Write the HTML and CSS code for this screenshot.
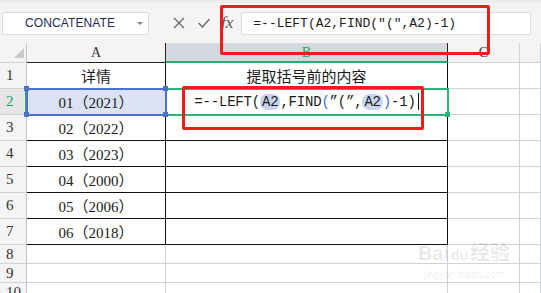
FILE: index.html
```html
<!DOCTYPE html>
<html lang="zh-CN">
<head>
  <meta charset="UTF-8" />
  <meta name="viewport" content="width=device-width, initial-scale=1.0"/>
  <title>提取括号前的内容</title>
  <link rel="stylesheet" href="styles.css">
</head>
<body>
  <div class="toolbar">
    <div class="name-box">
      <span class="name-text">CONCATENATE</span>
      <span class="name-arrow"></span>
    </div>
    <div class="bar-icons">
      <svg class="icon" width="14" height="14" viewBox="0 0 14 14"><path d="M2 2 L12 12 M12 2 L2 12" stroke="#666" stroke-width="1.3" fill="none"/></svg>
      <svg class="icon" width="14" height="14" viewBox="0 0 14 14"><path d="M1.5 7 L5.5 11 L12.5 3" stroke="#666" stroke-width="1.3" fill="none"/></svg>
      <span class="fx">fx</span>
    </div>
    <div class="formula-box">=--LEFT(A2,FIND("(",A2)-1)</div>
  </div>

  <div class="sheet">
    <div class="corner"><span class="corner-tri"></span></div>
    <div class="col-head dark">A</div>
    <div class="col-head dark active">B</div>
    <div class="col-head">C</div>
    <div class="col-head"></div>

    <div class="row-head">1</div>
    <div class="cell t">详情</div>
    <div class="cell t">提取括号前的内容</div>
    <div class="cell"></div>
    <div class="cell"></div>

    <div class="row-head active">2</div>
    <div class="cell t selected">01（2021）
      <span class="handle tl"></span><span class="handle tr"></span>
      <span class="handle bl"></span><span class="handle br"></span>
    </div>
    <div class="cell t editing">=--LEFT(<span class="ref">A2</span>,FIND<span class="paren">(</span>”(”,<span class="ref">A2</span><span class="paren">)</span>-1)<span class="caret"></span><span class="edit-handle"></span></div>
    <div class="cell"></div>
    <div class="cell"></div>

    <div class="row-head">3</div>
    <div class="cell t">02（2022）</div>
    <div class="cell t"></div>
    <div class="cell"></div>
    <div class="cell"></div>

    <div class="row-head">4</div>
    <div class="cell t">03（2023）</div>
    <div class="cell t"></div>
    <div class="cell"></div>
    <div class="cell"></div>

    <div class="row-head">5</div>
    <div class="cell t">04（2000）</div>
    <div class="cell t"></div>
    <div class="cell"></div>
    <div class="cell"></div>

    <div class="row-head">6</div>
    <div class="cell t">05（2006）</div>
    <div class="cell t"></div>
    <div class="cell"></div>
    <div class="cell"></div>

    <div class="row-head">7</div>
    <div class="cell t">06（2018）</div>
    <div class="cell t"></div>
    <div class="cell"></div>
    <div class="cell"></div>

    <div class="row-head">8</div>
    <div class="cell"></div>
    <div class="cell"></div>
    <div class="cell"></div>
    <div class="cell"></div>

    <div class="row-head">9</div>
    <div class="cell"></div>
    <div class="cell"></div>
    <div class="cell"></div>
    <div class="cell"></div>

    <div class="row-head">10</div>
    <div class="cell"></div>
    <div class="cell"></div>
    <div class="cell"></div>
    <div class="cell"></div>
  </div>

  <div class="mark mark-top"></div>
  <div class="mark mark-cell"></div>

  <div class="watermark">
    <div class="wm-logo">Bai<span class="wm-du">du</span>经验</div>
    <div class="wm-url">jingyan.baidu.com</div>
  </div>
</body>
</html>
```

FILE: styles.css
```css
* {
  box-sizing: border-box;
}

body {
  margin: 0;
  width: 541px;
  height: 293px;
  overflow: hidden;
  background: #fff;
  font-family: "Liberation Serif", "Noto Sans CJK SC", serif;
  position: relative;
}

/* formula bar */
.toolbar {
  height: 43px;
  background: #f4f4f4;
  border-top: 3px solid #ececec;
  display: flex;
  align-items: center;
  padding-left: 2px;
}

.name-box {
  width: 147px;
  height: 23px;
  background: #fff;
  border: 1px solid #dcdcdc;
  border-radius: 2px;
  display: flex;
  align-items: center;
  padding: 0 5px 0 22px;
}

.name-text {
  flex: 1;
  font-family: "Liberation Sans", sans-serif;
  font-size: 12px;
  color: #1e2a55;
  letter-spacing: 0.1px;
}

.name-arrow {
  width: 0;
  height: 0;
  border-left: 3px solid transparent;
  border-right: 3px solid transparent;
  border-top: 3px solid #888;
}

.bar-icons {
  display: flex;
  align-items: center;
  margin-left: 23px;
}

.icon + .icon {
  margin-left: 11px;
}

.fx {
  margin-left: 10px;
  font-family: "Liberation Serif", serif;
  font-style: italic;
  font-size: 17px;
  color: #555;
}

.formula-box {
  margin-left: 8px;
  width: 290px;
  height: 23px;
  background: #fff;
  border: 1px solid #dcdcdc;
  border-radius: 2px;
  padding-left: 11px;
  font-family: "Liberation Mono", monospace;
  font-size: 13px;
  line-height: 21px;
  color: #1b1b1b;
}

/* grid */
.sheet {
  display: grid;
  grid-template-columns: 27px 139px 282px 72px 1fr;
  grid-template-rows: 20px repeat(7, 26px) 19px 19px 19px;
}

.corner,
.col-head,
.row-head,
.cell {
  border-right: 1px solid #cdd2dd;
  border-bottom: 1px solid #cdd2dd;
  position: relative;
}

.corner {
  background: #f4f4f4;
  border-right-color: #bfc5d2;
}

.corner-tri {
  position: absolute;
  right: 2px;
  bottom: 4px;
  width: 0;
  height: 0;
  border-left: 10px solid transparent;
  border-bottom: 10px solid #c9c9c9;
}

.col-head {
  background: #f4f4f4;
  font-size: 14px;
  text-align: center;
  line-height: 20px;
  color: #333;
}

.col-head.dark {
  border-bottom-color: #222;
  border-right-color: #222;
}

.col-head.active {
  background: #d5d8de;
  color: #21a365;
  border-bottom: 2px solid #23b06e;
}

.row-head {
  background: #f4f4f4;
  border-right-color: #bfc5d2;
  font-size: 15px;
  padding-left: 6px;
  display: flex;
  align-items: center;
  color: #333;
  overflow: hidden;
}

.row-head.active {
  background: #e6e6e6;
  color: #21a365;
  border-right: 2px solid #23b06e;
}

.cell {
  display: flex;
  align-items: center;
  justify-content: center;
  font-size: 15px;
  color: #1a1a1a;
}

.cell.t {
  border-right-color: #111;
  border-bottom-color: #111;
}

.cell.selected {
  background: #dbe2f4;
  outline: 2px solid #4a72c8;
  outline-offset: -1px;
  z-index: 2;
}

.handle {
  position: absolute;
  width: 5px;
  height: 5px;
  background: #4a72c8;
}

.handle.tl { left: -3px; top: -3px; }
.handle.tr { right: -3px; top: -3px; }
.handle.bl { left: -3px; bottom: -3px; }
.handle.br { right: -3px; bottom: -3px; }

.cell.editing {
  font-family: "Liberation Mono", "Noto Sans CJK SC", monospace;
  font-size: 14px;
  letter-spacing: -0.2px;
  outline: 2px solid #2bb673;
  outline-offset: -1px;
  z-index: 1;
}

.ref {
  background: #c9d5ee;
  border-radius: 7px;
  padding: 0 2px;
}

.paren {
  color: #3b6fd4;
}

.caret {
  width: 1px;
  height: 17px;
  background: #111;
  margin-left: 2px;
}

.edit-handle {
  position: absolute;
  right: -3px;
  bottom: -3px;
  width: 5px;
  height: 5px;
  background: #2bb673;
}

/* red annotation boxes */
.mark {
  position: absolute;
  border: 3px solid #f01c1c;
  border-radius: 2px;
  z-index: 5;
}

.mark-top {
  left: 220px;
  top: 5px;
  width: 270px;
  height: 50px;
}

.mark-cell {
  left: 182px;
  top: 86px;
  width: 242px;
  height: 44px;
}

/* watermark */
.watermark {
  position: absolute;
  left: 414px;
  top: 240px;
  width: 100px;
  text-align: center;
  color: rgba(0, 0, 0, 0.09);
  font-family: "Liberation Sans", "Noto Sans CJK SC", sans-serif;
  z-index: 6;
}

.wm-logo {
  font-size: 20px;
  font-weight: bold;
  line-height: 26px;
}

.wm-du {
  font-size: 14px;
  margin: 0 2px;
}

.wm-url {
  font-size: 10px;
  line-height: 14px;
}
```
